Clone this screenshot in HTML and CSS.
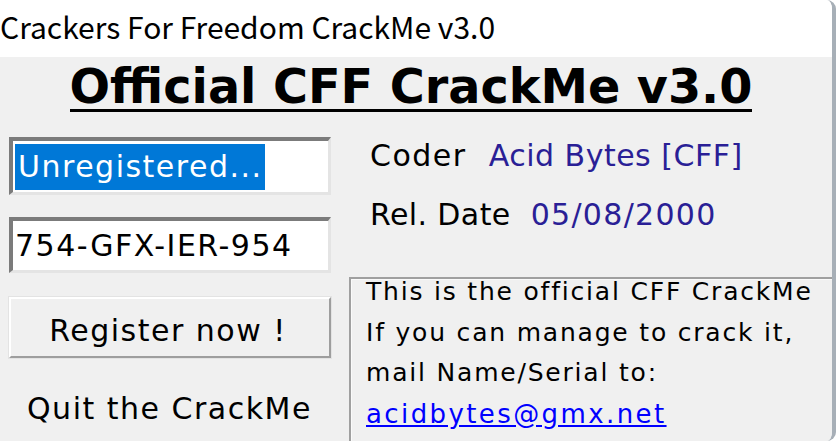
FILE: index.html
```html
<!DOCTYPE html>
<html>
<head>
<meta charset="utf-8">
<link rel="stylesheet" href="styles.css">
</head>
<body>
<div class="window">
  <div class="titlebar"><span class="title">Crackers For Freedom CrackMe v3.0</span></div>
  <div class="client">
    <div class="heading-row"><h1 class="heading">Official CFF CrackMe v3.0</h1></div>
    <div class="main">
      <div class="left">
        <div class="field field-name"><span class="sel">Unregistered...</span></div>
        <div class="field field-serial">754-GFX-IER-954</div>
        <div class="btn">Register now !</div>
        <div class="quit">Quit the CrackMe</div>
      </div>
      <div class="right">
        <div class="info info-coder"><span class="label">Coder</span><span class="value">Acid Bytes [CFF]</span></div>
        <div class="info info-date"><span class="label">Rel. Date</span><span class="value">05/08/2000</span></div>
        <div class="memo">
          <div class="memo-text">
            <div class="line">This is the official CFF CrackMe</div>
            <div class="line">If you can manage to crack it,</div>
            <div class="line">mail Name/Serial to:</div>
            <div class="line"><a class="mail" href="#">acidbytes@gmx.net</a></div>
          </div>
        </div>
      </div>
    </div>
  </div>
</div>
</body>
</html>
```
FILE: styles.css
```css
html, body {
  margin: 0;
  padding: 0;
  background: #ffffff;
  overflow: hidden;
}
.window {
  width: 832px;
  height: 441px;
  border-right: 4px solid #a7afb7;
  border-radius: 0 9px 9px 0;
  overflow: hidden;
  display: flex;
  flex-direction: column;
  background: #f0f0f0;
}
.titlebar {
  height: 57px;
  flex: none;
  background: #ffffff;
  display: flex;
  align-items: center;
}
.title {
  font-family: "Noto Sans CJK KR", "Noto Sans", sans-serif;
  font-size: 30px;
  color: #000;
  margin-left: 0;
  line-height: 1;
  padding-bottom: 5px;
}
.client {
  flex: 1;
  background: #f0f0f0;
  font-family: "DejaVu Sans", Verdana, sans-serif;
  font-size: 30px;
  letter-spacing: 1.5px;
  color: #000;
}
.heading-row {
  display: flex;
  justify-content: center;
  padding-top: 6px;
  height: 73px;
  box-sizing: border-box;
}
.heading {
  margin: 0 0 0 -10px;
  font-family: "DejaVu Sans", Verdana, sans-serif;
  font-weight: bold;
  font-size: 47.7px;
  letter-spacing: 0;
  line-height: 1;
  border-bottom: 3px solid #000;
  padding-bottom: 1px;
  height: 45px;
}
.main {
  display: flex;
  padding-left: 9px;
  gap: 18px;
}
.left {
  width: 322px;
  flex: none;
  display: flex;
  flex-direction: column;
  padding-top: 7px;
}
.field {
  height: 58px;
  box-sizing: border-box;
  background: #fff;
  border-style: solid;
  border-width: 4px 3px 3px 4px;
  border-color: #7b7b7b #e4e4e4 #e4e4e4 #7b7b7b;
  display: flex;
  align-items: center;
  padding-left: 2px;
  white-space: nowrap;
}
.field-serial {
  margin-top: 22px;
  height: 56px;
}
.sel {
  background: #0078d7;
  color: #fff;
  padding: 5px 2px 6px 3px;
  width: 245px;
}
.btn {
  margin-top: 24px;
  height: 61px;
  box-sizing: border-box;
  border-style: solid;
  border-width: 2px;
  border-color: #ffffff #9e9e9e #9e9e9e #ffffff;
  box-shadow: 0 0 0 1px #e3e3e3;
  display: flex;
  align-items: center;
  justify-content: center;
  padding-top: 5px;
  padding-right: 4px;
}
.quit {
  margin-top: 31px;
  padding-left: 18px;
  line-height: 40px;
}
.right {
  flex: 1;
  display: flex;
  flex-direction: column;
}
.info {
  padding-left: 21px;
  display: flex;
  white-space: nowrap;
  line-height: 40px;
}
.info-coder {
  margin-top: 6px;
}
.info-coder .value {
  margin-left: 22px;
  letter-spacing: 0.5px;
}
.info-date {
  margin-top: 19px;
}
.info-date .label {
  letter-spacing: 0.4px;
}
.info-date .value {
  margin-left: 20px;
  letter-spacing: 1.3px;
}
.value {
  color: #2a1f96;
}
.memo {
  margin-top: 42px;
  border-top: 2px solid #a0a0a0;
  border-left: 2px solid #a0a0a0;
  box-shadow: inset 1px 1px 0 #fafafa;
  padding-left: 15px;
  height: 200px;
  margin-right: -10px;
  font-size: 25px;
  letter-spacing: 1.8px;
}
.memo-text {
  margin-top: -7px;
}
.line {
  line-height: 40.5px;
  white-space: nowrap;
}
.mail {
  color: #0000ff;
  text-decoration: underline;
  font-size: 26px;
  letter-spacing: 2.4px;
}
```
